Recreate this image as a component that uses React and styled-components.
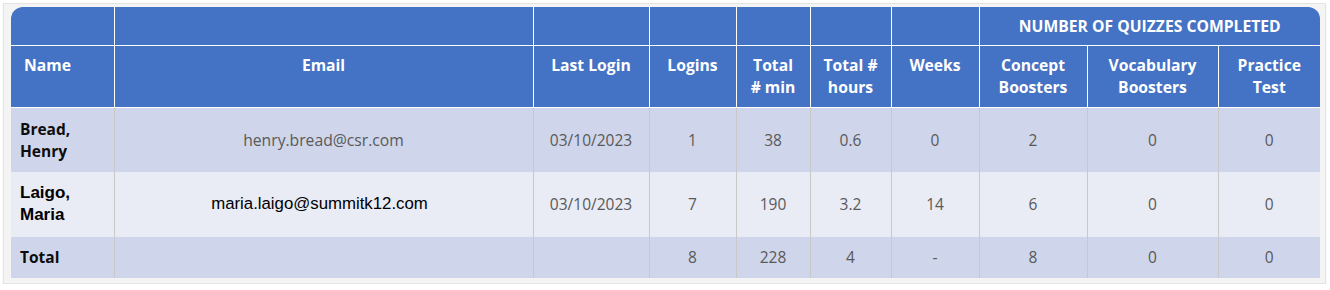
import styled, { createGlobalStyle } from 'styled-components';

const GlobalStyle = createGlobalStyle`
  html, body {
    margin: 0;
    padding: 0;
    background: #ffffff;
  }
`;

const Frame = styled.div`
  margin: 3px 0 0 3px;
  width: 1308px;
  padding: 3px 6px 5px 7px;
  background: #f4f4f4;
  border: 1px solid #e4e4e4;
  box-shadow: 0 1px 2px rgba(0, 0, 0, 0.06);
`;

const Clip = styled.div`
  width: 1309px;
  border-radius: 12px 12px 0 0;
  overflow: hidden;
`;

const Table = styled.table`
  width: 1309px;
  table-layout: fixed;
  border-collapse: collapse;
  font-family: 'Open Sans', 'Noto Sans', sans-serif;
  font-size: 15.5px;
  line-height: 22px;
`;

const HeadCell = styled.th`
  background: #4472c4;
  color: #ffffff;
  font-weight: 700;
  font-size: 15.7px;
  text-align: ${({ $left }) => ($left ? 'left' : 'center')};
  vertical-align: top;
  padding: ${({ $left }) => ($left ? '8px 6px 0 13px' : '8px 4px 0')};
  border: 1px solid #ffffff;
  border-top: none;
  height: 53px;

  &:first-child {
    border-left: none;
  }
  &:last-child {
    border-right: none;
  }
`;

const GroupCell = styled(HeadCell)`
  padding: 0 4px;
  height: 38px;
  vertical-align: middle;
`;

const Row = styled.tr`
  background: ${({ $alt }) => ($alt ? '#e9ebf5' : '#cfd5ea')};
  height: ${({ $h }) => $h}px;
`;

const Cell = styled.td`
  color: #595959;
  text-align: center;
  vertical-align: middle;
  padding: 0 4px;
  border-left: 1px solid #c9c9c9;
  border-right: 1px solid #c9c9c9;

  &:first-child {
    border-left: none;
  }
  &:last-child {
    border-right: none;
  }
`;

const NameCell = styled(Cell)`
  text-align: left;
  padding: 0 6px 0 9px;
  font-weight: 700;
  line-height: 22px;
  font-family: ${({ $arial }) =>
    $arial ? "'Liberation Sans', Arial, sans-serif" : "'Open Sans', sans-serif"};
  font-size: ${({ $arial }) => ($arial ? '17px' : '15.5px')};
  color: ${({ $arial }) => ($arial ? '#000000' : '#0d0d0d')};
`;

const EmailCell = styled(Cell)`
  font-family: ${({ $arial }) =>
    $arial ? "'Liberation Sans', Arial, sans-serif" : "'Open Sans', sans-serif"};
  font-size: ${({ $arial }) => ($arial ? '16.8px' : '15.7px')};
  color: ${({ $arial }) => ($arial ? '#000000' : '#595959')};
  padding-right: ${({ $arial }) => ($arial ? '12px' : '4px')};
`;

const widths = [103, 419, 116, 87, 74, 81, 88, 108, 131, 102];

const headers = [
  'Name',
  'Email',
  'Last Login',
  'Logins',
  <>Total<br /># min</>,
  <>Total #<br />hours</>,
  'Weeks',
  <>Concept<br />Boosters</>,
  <>Vocabulary<br />Boosters</>,
  <>Practice<br />Test</>,
];

const rows = [
  {
    name: <>Bread,<br />Henry</>,
    email: 'henry.bread@csr.com',
    values: ['03/10/2023', '1', '38', '0.6', '0', '2', '0', '0'],
    h: 64,
  },
  {
    name: <>Laigo,<br />Maria</>,
    email: 'maria.laigo@summitk12.com',
    values: ['03/10/2023', '7', '190', '3.2', '14', '6', '0', '0'],
    h: 65,
    alt: true,
    arial: true,
  },
  {
    name: 'Total',
    email: '',
    values: ['', '8', '228', '4', '-', '8', '0', '0'],
    h: 41,
  },
];

export default function App() {
  return (
    <>
      <GlobalStyle />
      <Frame>
        <Clip>
          <Table>
            <colgroup>
              {widths.map((w, i) => (
                <col key={i} style={{ width: w }} />
              ))}
            </colgroup>
            <thead>
              <tr>
                {widths.slice(0, 7).map((_, i) => (
                  <GroupCell key={i} />
                ))}
                <GroupCell colSpan={3}>NUMBER OF QUIZZES COMPLETED</GroupCell>
              </tr>
              <tr>
                {headers.map((h, i) => (
                  <HeadCell key={i} $left={i === 0}>
                    {h}
                  </HeadCell>
                ))}
              </tr>
            </thead>
            <tbody>
              {rows.map((r, i) => (
                <Row key={i} $alt={r.alt} $h={r.h}>
                  <NameCell $arial={r.arial}>{r.name}</NameCell>
                  <EmailCell $arial={r.arial}>{r.email}</EmailCell>
                  {r.values.map((v, j) => (
                    <Cell key={j}>{v}</Cell>
                  ))}
                </Row>
              ))}
            </tbody>
          </Table>
        </Clip>
      </Frame>
    </>
  );
}
